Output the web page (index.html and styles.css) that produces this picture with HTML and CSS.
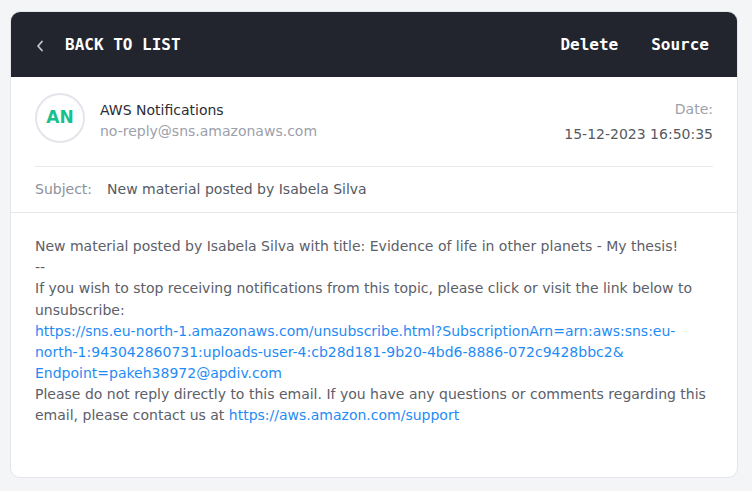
FILE: index.html
```html
<!DOCTYPE html>
<html lang="en">
<head>
<meta charset="utf-8">
<title>Email</title>
<link rel="stylesheet" href="styles.css">
</head>
<body>
<div class="card">
  <header class="topbar">
    <a class="back" href="#">
      <svg class="chev" width="8" height="12" viewBox="0 0 8 12"><path d="M6 1.5 L2 6 L6 10.5" fill="none" stroke="#c3c6cc" stroke-width="1.8" stroke-linecap="round" stroke-linejoin="round"/></svg>
      <span>BACK TO LIST</span>
    </a>
    <nav class="actions">
      <a href="#">Delete</a>
      <a href="#">Source</a>
    </nav>
  </header>
  <section class="meta">
    <div class="sender-row">
      <div class="avatar">AN</div>
      <div class="sender">
        <div class="name">AWS Notifications</div>
        <div class="email">no-reply@sns.amazonaws.com</div>
      </div>
      <div class="date">
        <div class="date-label">Date:</div>
        <div class="date-value">15-12-2023 16:50:35</div>
      </div>
    </div>
    <div class="subject-row">
      <span class="subject-label">Subject:</span>
      <span class="subject-value">New material posted by Isabela Silva</span>
    </div>
  </section>
  <section class="body">
    New material posted by Isabela Silva with title: Evidence of life in other planets - My thesis!<br>
    --<br>
    If you wish to stop receiving notifications from this topic, please click or visit the link below to unsubscribe:<br>
    <a href="#">https://sns.eu-north-1.amazonaws.com/unsubscribe.html?SubscriptionArn=arn:aws:sns:eu-north-1:943042860731:uploads-user-4:cb28d181-9b20-4bd6-8886-072c9428bbc2&amp;<wbr>Endpoint=pakeh38972@apdiv.com</a><br>
    Please do not reply directly to this email. If you have any questions or comments regarding this email, please contact us at <a href="#">https://aws.amazon.com/support</a>
  </section>
</div>
</body>
</html>
```

FILE: styles.css
```css
html, body {
  margin: 0;
  padding: 0;
  background: #f4f5f7;
}
body {
  padding: 11px 14px 14px 10px;
  font-family: "DejaVu Sans", sans-serif;
  font-size: 14px;
  line-height: 21.1px;
}
.card {
  background: #ffffff;
  border: 1px solid #e3e5ea;
  border-radius: 10px;
  overflow: hidden;
}
.topbar {
  background: #22252d;
  height: 64px;
  display: flex;
  align-items: center;
  justify-content: space-between;
  padding: 1px 28px 0 25px;
  font-family: "DejaVu Sans Mono", monospace;
  font-weight: bold;
  font-size: 16px;
  color: #ffffff;
}
.topbar a {
  color: #ffffff;
  text-decoration: none;
}
.back {
  display: flex;
  align-items: center;
}
.chev {
  margin-right: 21px;
  margin-top: 1px;
}
.actions {
  display: flex;
  gap: 33px;
}
.meta {
  padding: 16px 24px 0 24px;
  border-bottom: 1px solid #e8e9ee;
}
.sender-row {
  display: flex;
  align-items: flex-start;
  padding-bottom: 21px;
  border-bottom: 1px solid #e8e9ee;
}
.avatar {
  width: 46px;
  height: 46px;
  border: 2px solid #e4e4ec;
  border-radius: 50%;
  display: flex;
  align-items: center;
  justify-content: center;
  color: #17c08e;
  font-weight: bold;
  font-size: 17px;
  flex: none;
}
.sender {
  margin-left: 15px;
  padding-top: 7px;
  flex: 1;
}
.name {
  color: #2a2d35;
}
.email {
  color: #9ca0aa;
}
.date {
  text-align: right;
  padding-top: 6px;
}
.date-label {
  color: #9da1ab;
}
.date-value {
  color: #555a62;
  margin-top: 4px;
}
.subject-row {
  padding: 12px 0 12px 0;
  display: flex;
  gap: 15px;
}
.subject-label {
  color: #8d919b;
}
.subject-value {
  color: #555a62;
}
.body {
  padding: 23px 24px 51px 24px;
  color: #5c6068;
}
.body a {
  color: #1f8bf5;
  text-decoration: none;
}
```
